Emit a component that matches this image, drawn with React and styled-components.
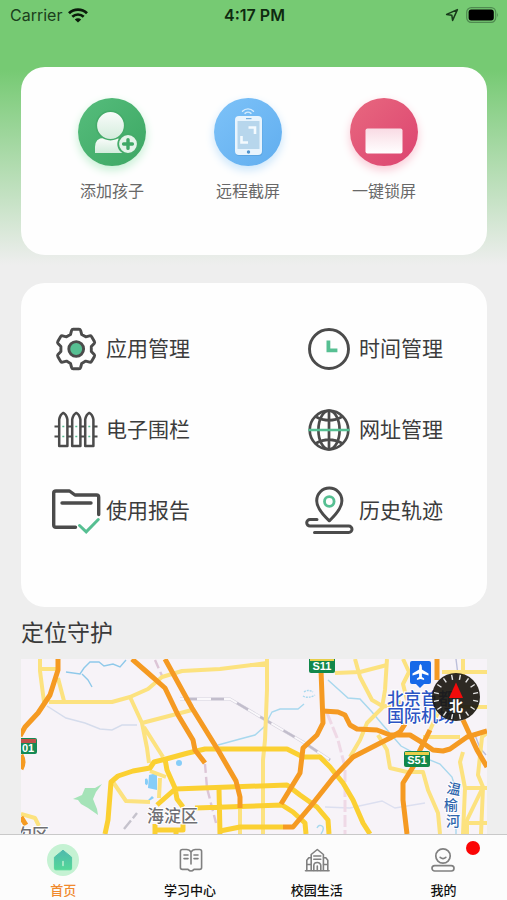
import React from "react";
import styled, { createGlobalStyle } from "styled-components";

export default function App() {
  return (
    <Page>
      <GlobalStyle />
      <StatusBar>
        <Carrier>
          Carrier
          <WifiIcon />
        </Carrier>
        <Clock>4:17 PM</Clock>
        <StatusIcons>
          <LocationIcon />
          <BatteryIcon />
        </StatusIcons>
      </StatusBar>
      <Content>
        <QuickCard>
          {quickActions.map(({ label, Icon, glow }) => (
            <QuickButton key={label} type="button">
              <Round $glow={glow}>
                <Icon />
              </Round>
              {label}
            </QuickButton>
          ))}
        </QuickCard>
        <MenuCard>
          {menuItems.map(({ label, Icon }) => (
            <MenuButton key={label} type="button">
              <Icon />
              {label}
            </MenuButton>
          ))}
        </MenuCard>
        <SectionTitle>定位守护</SectionTitle>
        <MapBox>
          <CityMap />
          <CompassButton type="button" aria-label="指北">
            <CompassIcon />
          </CompassButton>
        </MapBox>
      </Content>
      <TabBar>
        {tabs.map(({ label, Icon, active, dot }) => (
          <Tab key={label} href="#" $active={active}>
            <Icon />
            {label}
            {dot && <Dot />}
          </Tab>
        ))}
      </TabBar>
    </Page>
  );
}

/* status bar icons */

function WifiIcon() {
  return (
    <svg width="20" height="15" viewBox="0 0 20 15" fill="none" stroke="#0a1a0a">
      <path d="M1 5.2a13 13 0 0 1 18 0" strokeWidth="2.8" />
      <path d="M4.3 8.8a8.2 8.2 0 0 1 11.4 0" strokeWidth="2.6" />
      <path d="M10 14.6 6.8 11.6a4.6 4.6 0 0 1 6.4 0z" fill="#0a1a0a" stroke="none" />
    </svg>
  );
}

function LocationIcon() {
  return (
    <svg width="14" height="14" viewBox="0 0 14 14" fill="none">
      <path
        d="M12.4 1.6 1.6 6.4l5.2.8.8 5.2z"
        stroke="#17391a"
        strokeWidth="1.5"
        strokeLinejoin="round"
      />
    </svg>
  );
}

function BatteryIcon() {
  return (
    <svg width="33" height="16" viewBox="0 0 33 16">
      <rect x="0.7" y="0.7" width="29" height="14.6" rx="4.6" fill="none" stroke="#4f8a50" strokeWidth="1.2" />
      <rect x="2.6" y="2.6" width="25.2" height="10.8" rx="2.6" fill="#000" />
      <path d="M31 5.6q1.7 2.2 0 4.6z" fill="#4f8a50" />
    </svg>
  );
}

/* quick action icons */

function AddChildIcon() {
  return (
    <svg width="68" height="68" viewBox="0 0 68 68">
      <defs>
        <linearGradient id="green" x1="0" y1="0" x2="1" y2="1">
          <stop offset="0" stopColor="#56bd7c" />
          <stop offset="1" stopColor="#3ca763" />
        </linearGradient>
        <linearGradient id="person" x1="0" y1="0" x2="0" y2="1">
          <stop offset="0" stopColor="#fafcfb" />
          <stop offset="1" stopColor="#d3ecdc" />
        </linearGradient>
      </defs>
      <circle cx="34" cy="34" r="34" fill="url(#green)" />
      <path d="M17 55V49q0-9 9-9h12q7 0 9 15z" fill="url(#person)" />
      <circle cx="32.5" cy="27.5" r="14.2" fill="url(#person)" stroke="#45ab6a" strokeWidth="1.6" />
      <circle cx="50" cy="46" r="9.8" fill="#e3f4e9" stroke="#45ab6a" strokeWidth="1.8" />
      <path d="M50 41.6v8.8M45.6 46h8.8" stroke="#3fa866" strokeWidth="3.4" strokeLinecap="round" />
    </svg>
  );
}

function ScreenshotIcon() {
  return (
    <svg width="68" height="68" viewBox="0 0 68 68">
      <defs>
        <linearGradient id="blue" x1="0" y1="0" x2="1" y2="1">
          <stop offset="0" stopColor="#7dc2f8" />
          <stop offset="1" stopColor="#61aeef" />
        </linearGradient>
      </defs>
      <circle cx="34" cy="34" r="34" fill="url(#blue)" />
      <path
        d="M28.5 13.2a7.6 7.6 0 0 1 11 0M31 15.400a4.600 4.600 0 0 1 6 0"
        fill="none"
        stroke="#d6ecfd"
        strokeWidth="1.4"
        strokeLinecap="round"
      />
      <rect x="21.500" y="19" width="27" height="39" rx="4" fill="#4c96d2" opacity="0.5" />
      <rect x="21" y="18" width="27" height="39" rx="4" fill="#e8f4fd" />
      <path d="M32 20.600h5.500" stroke="#77aedc" strokeWidth="1.2" />
      <rect x="23.500" y="23" width="22" height="28" rx="0.5" fill="#b7d6ec" />
      <path d="M34.500 29.500h6.500v6.500" fill="none" stroke="#f4fafe" strokeWidth="2.6" />
      <path d="M27.500 38v6.500h6.500" fill="none" stroke="#f4fafe" strokeWidth="2.6" />
      <circle cx="34.500" cy="54" r="1.7" fill="#4f93cd" />
    </svg>
  );
}

function LockScreenIcon() {
  return (
    <svg width="68" height="68" viewBox="0 0 68 68">
      <defs>
        <linearGradient id="red" x1="0" y1="0" x2="1" y2="1">
          <stop offset="0" stopColor="#e8687f" />
          <stop offset="1" stopColor="#dc4470" />
        </linearGradient>
        <linearGradient id="screen" x1="0" y1="0" x2="0" y2="1">
          <stop offset="0" stopColor="#f9dbe4" />
          <stop offset="1" stopColor="#ffffff" />
        </linearGradient>
      </defs>
      <circle cx="34" cy="34" r="34" fill="url(#red)" />
      <rect x="15.5" y="30.5" width="37" height="25" rx="2" fill="url(#screen)" />
    </svg>
  );
}

/* menu icons */

const ink = "#4b4b4b";
const mint = "#56bf92";

function GearIcon() {
  return (
    <svg width="52" height="52" viewBox="0 0 52 52" fill="none" stroke={ink}>
      <path
        d="M20.5 11.5 21.6 7.4Q22 6.2 23.2 6.2H29Q30.2 6.2 30.6 7.4L31.7 11.5 35.7 13.8 39.6 12.8Q40.8 12.5 41.5 13.5L44.4 18.5Q45 19.6 44.2 20.5L41.3 23.6V28.4L44.2 31.4Q45 32.3 44.4 33.4L41.5 38.4Q40.8 39.5 39.6 39.2L35.7 38.1 31.7 40.5 30.6 44.5Q30.2 45.8 29 45.8H23.2Q22 45.8 21.6 44.5L20.5 40.5 16.5 38.1 12.6 39.2Q11.4 39.5 10.7 38.4L7.8 33.4Q7.2 32.3 8 31.4L10.9 28.4V23.6L8 20.5Q7.2 19.6 7.8 18.5L10.7 13.5Q11.4 12.5 12.6 12.8L16.5 13.8z"
        strokeWidth="2.9"
        strokeLinejoin="round"
      />
      <circle cx="26.2" cy="26" r="7.4" fill={mint} strokeWidth="2.9" />
    </svg>
  );
}

function ClockIcon() {
  return (
    <svg width="52" height="52" viewBox="0 0 52 52" fill="none">
      <circle cx="26" cy="26" r="19.5" stroke={ink} strokeWidth="2.9" />
      <path d="M25.4 17.5v9.9h9" stroke={mint} strokeWidth="3.8" />
    </svg>
  );
}

function FenceIcon() {
  return (
    <svg width="52" height="52" viewBox="0 0 52 52" fill="none" stroke={ink}>
      <path d="M4.500 22.5H8M44 22.5h3.500M4.500 32.5H8M44 32.5h3.500M18 22.5h4M31 22.5h4M18 32.5h4M31 32.5h4" strokeWidth="2.2" />
      <path
        d="M9.2 42V15.5Q10.2 10.5 13.3 8.900 16.4 10.5 17.4 15.5V42zM22.2 42V15.5Q23.2 10.5 26.3 8.900 29.4 10.5 30.4 15.5V42zM35.2 42V15.5Q36.2 10.5 39.3 8.900 42.4 10.5 43.4 15.5V42z"
        strokeWidth="2.5"
        strokeLinejoin="round"
      />
      <path
        d="M12.300 22.5h2M25.300 22.5h2M38.300 22.5h2M12.300 32.5h2M25.300 32.5h2M38.300 32.5h2"
        stroke={mint}
        strokeWidth="1.6"
      />
    </svg>
  );
}

function GlobeIcon() {
  return (
    <svg width="52" height="52" viewBox="0 0 52 52" fill="none" stroke={ink} strokeWidth="2.7">
      <circle cx="26" cy="26" r="19.3" />
      <ellipse cx="26" cy="26" rx="10.6" ry="19.3" />
      <path d="M26 6.7v38.6M12.5 12.6q13.5 7.6 27 0M12.5 39.4q13.5-7.6 27 0" />
      <path d="M5.4 26h41.2" stroke={mint} />
    </svg>
  );
}

function ReportIcon() {
  return (
    <svg width="52" height="52" viewBox="0 0 52 52" fill="none" stroke={ink} strokeWidth="3.4" strokeLinecap="round">
      <path d="M25.5 42.3H6Q3.7 42.3 3.7 40V8Q3.7 6 6 6H19.5L25 10H46.5Q48.7 10 48.7 12.3V29.5" strokeLinejoin="round" />
      <path d="M12 18h29" />
      <path d="M29.5 40.5l6.7 6.3L48.3 34.5" stroke={mint} strokeWidth="3" />
    </svg>
  );
}

function TrackIcon() {
  return (
    <svg width="52" height="52" viewBox="0 0 52 52" fill="none" stroke={ink} strokeWidth="3" strokeLinecap="round">
      <path d="M26.3 35.8Q13.7 24 13.7 15.700a12.6 12.6 0 0 1 25.2 0Q38.9 24 26.3 35.8z" strokeLinejoin="round" />
      <circle cx="26.3" cy="16.500" r="4.8" stroke={mint} strokeWidth="2.8" />
      <path d="M14 34.500H7a3.3 3.3 0 0 0 0 6.6H45.800a3.2 3.2 0 0 1 0 6.4H11.5" />
    </svg>
  );
}

/* tab icons */

function HomeIcon() {
  return (
    <svg width="32" height="32" viewBox="0 0 32 32">
      <circle cx="16" cy="16" r="16" fill="#c5f2d3" />
      <defs>
        <linearGradient id="house" x1="0" y1="0" x2="0" y2="1">
          <stop offset="0" stopColor="#4fb9ad" />
          <stop offset="1" stopColor="#54d898" />
        </linearGradient>
      </defs>
      <path
        d="M16 6.2 24.6 13.2V24.4Q24.6 25.8 23.2 25.8H8.8Q7.4 25.8 7.4 24.4V13.2z"
        fill="url(#house)"
        stroke="url(#house)"
        strokeLinejoin="round"
      />
      <path d="M16 17.5v4" stroke="#c5f2d3" strokeWidth="1.4" strokeLinecap="round" />
    </svg>
  );
}

function BookIcon() {
  return (
    <svg width="32" height="32" viewBox="0 0 32 32" fill="none" stroke="#808080" strokeWidth="1.6" strokeLinecap="round" strokeLinejoin="round">
      <path d="M17 8.2Q15.5 5.5 12.5 5.5H8.4Q6.4 5.5 6.4 7.5V23.5Q6.4 25.4 8.4 25.4H14Q15.4 27 17 27T20 25.4H25.6Q27.6 25.4 27.6 23.5V7.5Q27.6 5.5 25.6 5.5H21.5Q18.5 5.5 17 8.2V20" />
      <path d="M10 11h4M10 14.6h4M20 11h4M20 14.6h4" />
    </svg>
  );
}

function CampusIcon() {
  return (
    <svg width="32" height="32" viewBox="0 0 32 32" fill="none" stroke="#808080" strokeWidth="1.6" strokeLinecap="round" strokeLinejoin="round">
      <path d="M4.5 26.8h23.6M10.2 26.5V10.5L16.3 5.5 22.4 10.5V26.5" />
      <path d="M10 13.8H7.8L5.8 16.2V26.5M22.6 13.8H24.8L26.8 16.2V26.5M6 20.5h4M22.6 20.5h4" />
      <path d="M12.8 12h7M12.8 15.2h7M12.8 26.5V21.5a3.5 3 0 0 1 7 0V26.5M16.3 22v4.5" />
    </svg>
  );
}

function MineIcon() {
  return (
    <svg width="32" height="32" viewBox="0 0 32 32" fill="none" stroke="#808080" strokeWidth="1.7" strokeLinecap="round">
      <circle cx="15" cy="12" r="7.2" />
      <path d="M12.2 13.4q2.8 2.4 5.6 0" />
      <rect x="4" y="21.6" width="22" height="5.400" rx="2.7" />
    </svg>
  );
}

/* map */

function CompassIcon() {
  const ticks = Array.from({ length: 16 }, (_, i) => i * 22.5 + 11.25);
  return (
    <svg width="48" height="48" viewBox="0 0 48 48">
      <circle cx="24" cy="24" r="24" fill="#1b1810" fillOpacity="0.92" />
      {ticks.map((deg) => (
        <path key={deg} d="M24 1.5v5" stroke="#e8e8e8" strokeWidth="1.4" transform={`rotate(${deg} 24 24)`} />
      ))}
      <path d="M24 9.5 31 25H17z" fill="#f30b0b" />
      <text x="24" y="38" textAnchor="middle" fontSize="14" fontWeight="700" fill="#fff">
        北
      </text>
    </svg>
  );
}

function CityMap() {
  return (
    <MapSvg viewBox="21 659 466 175" preserveAspectRatio="xMinYMin slice" role="img" aria-label="地图">
      <rect x="21" y="659" width="466" height="175" fill="#f7f3f8" />

      {/* parks and lakes */}
      <path d="M73 799 82 795 85 788 95 788 102 784 96 792 93 799 97 809 98 815 88 808 81 804 78 800z" fill="#a5e3b8" />
      <path d="M149 775 157 773V790L148 788z" fill="#86cdf8" />
      <path d="M145 779q3-2 3 3t-3 2zM147 801l5-5 2 2-5 3z" fill="#86cdf8" />
      <circle cx="179" cy="763" r="3" fill="#86cdf8" />

      {/* rivers */}
      <g fill="none" stroke="#a8d8ee" strokeWidth="1.4">
        <path d="M66 672 80 674 84 668 90 662 99 662 104 666 113 664 120 667 126 660M82 674 88 680 92 687" stroke="#8fc9ea" />
        <path d="M47 706 66 718 85 723 100 729 112 730 122 725 137 725" stroke="#d5dcec" />
        <path d="M218 745 240 739 255 735 264 727 272 712 280 709 298 709 304 704" />
        <path d="M328 680 348 698 360 699 372 712 382 724 401 746 420 756 440 764 452 777 456 790M456 824V834" />
        <path d="M304 692q4-3 9 0M303 696q5 3 12-1" strokeDasharray="2 1" />
        <path d="M325 807 350 808 382 801 395 808 425 803" stroke="#dcdff0" />
        <path d="M456 659 458 675M475 735 480 748 486 755" stroke="#bcbfda" />
        <path d="M317 828q2-4 5-2t-1 8" />
      </g>

      {/* railways */}
      <g fill="none">
        <path d="M180 699H230L303 742 330 760" stroke="#d6d3de" strokeWidth="3" />
        <path d="M180 699H230L303 742 330 760" stroke="#faf8fb" strokeWidth="1.8" />
        <path d="M184 699H230L303 742 330 760" stroke="#c2bdcc" strokeWidth="2.4" strokeDasharray="13 14" />
        <path d="M155 660 163 678M205 764 207 788 216 823" stroke="#dcc5d6" strokeWidth="2.4" strokeDasharray="9 4" />
        <path d="M327 713 338 740 345 767V834" stroke="#efd9e6" strokeWidth="3" strokeDasharray="12 3" />
        <path d="M124 829 137 813" stroke="#c5c2cc" strokeWidth="2.4" strokeDasharray="11 3" />
      </g>

      {/* minor roads */}
      <g fill="none" stroke="#fce27f" strokeWidth="4" strokeLinejoin="round">
        <path d="M40 659V671L44 702M40 669H58M58 678 64 701" />
        <path d="M49 702H112L130 697 148 689 162 677 182 671 220 669 267 663" />
        <path d="M130 697 142 723 147 748 149 763M142 723 192 710M144 727 163 757" />
        <path d="M113 782 126 801 150 802M150 771 166 777M160 778 159 798" />
        <path d="M21 814 35 818 39 826M240 808V834" />
        <path d="M267 659 267 690 265 740 263 760V834M250 665H267M335 673 360 672 387 665" />
        <path d="M355 659 360 677 372 700 384 707M387 659 385 690 382 708 367 723 360 740 350 757" />
        <path d="M378 735 387 750 390 768 407 772H423L428 790 438 813 440 834" />
        <path d="M403 659 409 672 403 684 407 700M382 707 402 702" />
        <path d="M442 672H487M445 707H487M423 737H460M430 730 444 700" />
        <path d="M463 659V675M487 733 482 737 478 775 483 787 467 820V834" />
        <path d="M463 752 460 762 465 788 463 834M465 788H487M466 823H487M483 787 481 834" />
      </g>

      {/* ring roads */}
      <g fill="none" stroke="#fbd032" strokeWidth="5" strokeLinejoin="round">
        <path d="M105 834 108 820 111 782 118 776 133 771 150 768 154 762 166 759 188 753 205 749H287L303 757H320L330 767 343 783 353 800 363 823 370 834" />
        <path d="M165 759 167 770 175 788 177 799 183 807M157 805 174 790M175 789 287 785 300 795 317 807 328 820 329 834" />
        <path d="M195 808 282 805 293 812 305 823 306 834M219 789 220 834M220 831 240 827H283" />
        <path d="M155 824V834M155 830H183V824M176 834V830" />
      </g>

      {/* expressways */}
      <g fill="none" stroke="#f59a22" strokeWidth="5" strokeLinejoin="round">
        <path d="M58 659V670L50 695 38 713 25 727 20 736M21 755Q25 762 21 769M21 817 26 825" />
        <path d="M132 659 148 673 165 688 178 715 193 740 195 750 205 763" />
        <path d="M165 659 192 708 218 750 236 781 240 797V808" />
        <path d="M321 670 323 723 317 735 303 748 300 773 281 804" />
        <path d="M323 711 338 712 345 715 350 725 357 729 377 730 390 735H410L423 743 433 750 443 751 450 749 467 737 487 731" />
        <path d="M283 827H293L310 807 333 778 353 757 390 738 400 732 405 724" />
        <path d="M430 730 420 750 413 767 403 783V800L407 834" />
        <path d="M437 659V680M463 720 477 750 487 767" />
      </g>

      {/* road shields */}
      <Shield x={309} y={657} width={26} label="S11" />
      <Shield x={404} y={751} width={26} label="S51" />
      <rect x="11" y="738" width="26" height="16" rx="2" fill="#158a55" />
      <rect x="12" y="739" width="24" height="4" fill="#c0504a" />
      <ShieldText x="28" y="752">
        01
      </ShieldText>

      {/* place names */}
      <path d="M412 661h17q2 0 2 2v19q0 2-2 2h-5l-4 4-4-4h-4q-2 0-2-2V663q0-2 2-2z" fill="#1769e8" />
      <path
        d="M420.500 664q1.400 1 1.400 3.400v2l6.600 4.200v1.800l-6.600-2v3.600l2.200 1.600v1.400l-3.600-1-3.600 1v-1.400l2.200-1.600v-3.600l-6.600 2v-1.800l6.600-4.200v-2q0-2.400 1.400-3.400z"
        fill="#fff"
      />
      <PlaceName $blue x="387" y="705">
        北京首都
      </PlaceName>
      <PlaceName $blue x="387" y="722">
        国际机场
      </PlaceName>
      <PlaceName x="147" y="822">
        海淀区
      </PlaceName>
      <PlaceName x="15" y="841">
        沟区
      </PlaceName>
      <RiverName x="447" y="794" transform="rotate(12 454 788)">
        温
      </RiverName>
      <RiverName x="444" y="810">
        榆
      </RiverName>
      <RiverName x="446" y="826">
        河
      </RiverName>
    </MapSvg>
  );
}

function Shield({ x, y, width, label }) {
  return (
    <g>
      <rect x={x} y={y} width={width} height="16" rx="2" fill="#12874b" />
      <rect x={x + 1} y={y + 1} width={width - 2} height="3" fill="#e9cf49" />
      <ShieldText x={x + width / 2} y={y + 13}>
        {label}
      </ShieldText>
    </g>
  );
}

const quickActions = [
  { label: "添加孩子", Icon: AddChildIcon, glow: "#c3efd2" },
  { label: "远程截屏", Icon: ScreenshotIcon, glow: "#c8e5fb" },
  { label: "一键锁屏", Icon: LockScreenIcon, glow: "#fac9d5" },
];

const menuItems = [
  { label: "应用管理", Icon: GearIcon },
  { label: "时间管理", Icon: ClockIcon },
  { label: "电子围栏", Icon: FenceIcon },
  { label: "网址管理", Icon: GlobeIcon },
  { label: "使用报告", Icon: ReportIcon },
  { label: "历史轨迹", Icon: TrackIcon },
];

const tabs = [
  { label: "首页", Icon: HomeIcon, active: true },
  { label: "学习中心", Icon: BookIcon },
  { label: "校园生活", Icon: CampusIcon },
  { label: "我的", Icon: MineIcon, dot: true },
];

const GlobalStyle = createGlobalStyle`
  * {
    box-sizing: border-box;
  }
  body {
    margin: 0;
    font-family: Inter, "Noto Sans CJK SC", sans-serif;
  }
  button {
    padding: 0;
    border: 0;
    background: none;
    font: inherit;
    cursor: pointer;
  }
  svg {
    display: block;
    flex: none;
  }
`;

const Page = styled.div`
  display: flex;
  flex-direction: column;
  height: 100vh;
  background: #eeeeee linear-gradient(#76ca73 70px, #eeeeee 265px) no-repeat;
`;

const StatusBar = styled.header`
  display: grid;
  grid-template-columns: 1fr auto 1fr;
  align-items: center;
  flex: none;
  height: 30px;
  padding: 0 8px 0 10px;
  font-size: 16px;
  color: #1b3f1c;
`;

const Carrier = styled.div`
  display: flex;
  align-items: center;
  gap: 6px;
`;

const Clock = styled.div`
  font-weight: 600;
  color: #0f2a10;
`;

const StatusIcons = styled.div`
  display: flex;
  align-items: center;
  justify-content: flex-end;
  gap: 7px;
`;

const Content = styled.main`
  display: flex;
  flex-direction: column;
  flex: 1;
  min-height: 0;
  padding: 37px 20px 0 21px;
`;

const Card = styled.section`
  flex: none;
  border-radius: 24px;
  background: #fefefe;
`;

const QuickCard = styled(Card)`
  display: grid;
  grid-template-columns: repeat(3, 1fr);
  padding: 31px 35px 52px 23px;
`;

const QuickButton = styled.button`
  display: flex;
  flex-direction: column;
  align-items: center;
  gap: 13px;
  font-size: 16px;
  line-height: 24px;
  color: #686868;
`;

const Round = styled.span`
  border-radius: 50%;
  box-shadow: 0 4px 10px ${(props) => props.$glow};
`;

const MenuCard = styled(Card)`
  display: grid;
  grid-template-columns: auto auto;
  justify-content: space-between;
  row-gap: 29px;
  margin-top: 28px;
  padding: 40px 44px 70px 29px;
`;

const MenuButton = styled.button`
  display: flex;
  align-items: center;
  gap: 4px;
  font-size: 21px;
  line-height: 32px;
  color: #3c3c3c;
`;

const SectionTitle = styled.h2`
  flex: none;
  margin: 8px 0;
  font-size: 23px;
  font-weight: 400;
  line-height: 36px;
  color: #3a3a3a;
`;

const MapBox = styled.section`
  position: relative;
  flex: 1;
  min-height: 0;
  overflow: hidden;
`;

const MapSvg = styled.svg`
  width: 100%;
  height: 100%;
`;

const ShieldText = styled.text`
  font-family: "Liberation Sans", sans-serif;
  font-size: 11px;
  font-weight: 700;
  text-anchor: middle;
  fill: #fff;
`;

const PlaceName = styled.text`
  font-size: 17px;
  font-weight: 500;
  fill: ${(props) => (props.$blue ? "#2c55c4" : "#6f6f74")};
  stroke: #fff;
  stroke-width: 2px;
  paint-order: stroke;
`;

const RiverName = styled.text`
  font-size: 14px;
  font-weight: 500;
  fill: #2f66ad;
  stroke: #fff;
  stroke-width: 2px;
  paint-order: stroke;
`;

const CompassButton = styled.button`
  position: absolute;
  top: 14px;
  right: 7px;
`;

const TabBar = styled.nav`
  display: grid;
  grid-template-columns: repeat(4, 1fr);
  flex: none;
  height: 66px;
  border-top: 1px solid #c9c9c9;
  background: #fcfcfc;
`;

const Tab = styled.a`
  position: relative;
  display: flex;
  flex-direction: column;
  align-items: center;
  gap: 4px;
  padding-top: 9px;
  font-size: 13px;
  font-weight: 500;
  line-height: 20px;
  color: ${(props) => (props.$active ? "#f08a2e" : "#111111")};
  text-decoration: none;
`;

const Dot = styled.span`
  position: absolute;
  top: 6px;
  left: calc(50% + 22px);
  width: 14px;
  height: 14px;
  border-radius: 50%;
  background: #fb0505;
`;
